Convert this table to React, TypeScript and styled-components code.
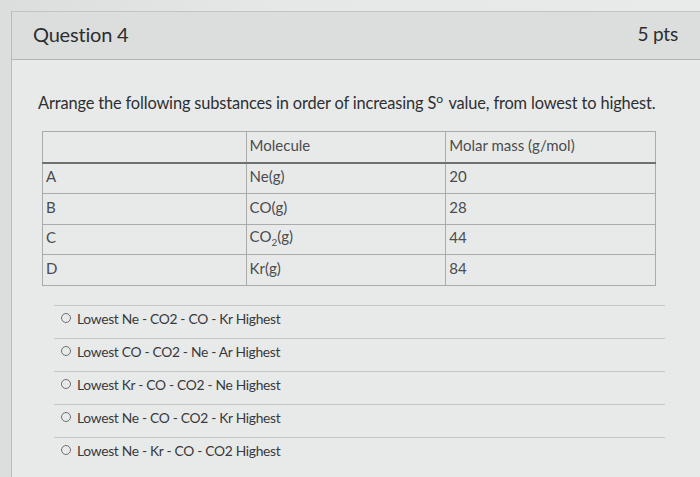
import React from "react";
import styled, { createGlobalStyle } from "styled-components";

const Global = createGlobalStyle`
  html, body { margin: 0; padding: 0; }
  body {
    width: 700px; height: 477px; overflow: hidden;
    background: #d9dbdb;
    font-family: Lato, "Open Sans", sans-serif;
  }
`;

const Page = styled.div`
  width: 700px;
  height: 477px;
  padding: 11px 0 0 11px;
  box-sizing: border-box;
  background: linear-gradient(90deg, #dcdede 0%, #e6e8e8 40%, #e9ebeb 100%);
`;

const Card = styled.div`
  height: 100%;
  border-left: 1px solid #b9bbbb;
  border-top: 1px solid #c3c5c5;
  background: #e8eaea;
`;

const Header = styled.div`
  height: 48px;
  box-sizing: border-box;
  display: flex;
  align-items: center;
  justify-content: space-between;
  padding: 0 22px 4px 21px;
  background: #dcdedd;
  border-bottom: 1px solid #b3b5b5;
`;

const Title = styled.h2`
  margin: 0;
  font-size: 20px;
  font-weight: 400;
  color: #2b2d2f;
  letter-spacing: -0.2px;
`;

const Points = styled.span`
  font-size: 19px;
  color: #2b2d2f;
  letter-spacing: -0.2px;
`;

const Body = styled.div`
  padding: 33px 0 0 26px;
`;

const Prompt = styled.p`
  margin: 0 0 19px 0;
  font-size: 16.4px;
  color: #2d2f31;
  letter-spacing: -0.15px;
  sup { font-size: 12px; line-height: 0; margin-right: 2px; }
`;

const Table = styled.table`
  border-collapse: collapse;
  width: 614px;
  margin-left: 4px;
  font-size: 15px;
  color: #4a4c4e;
  td, th {
    border: 1px solid #a9abac;
    height: 25.5px;
    padding: 0 2px 4px 3px;
    text-align: left;
    vertical-align: middle;
    font-weight: 400;
  }
  th { border-bottom: 2px solid #6e7072; }
  sub { font-size: 10px; }
`;

const Answers = styled.div`
  margin: 19px 0 0 16px;
  width: 611px;
`;

const Answer = styled.label`
  display: flex;
  align-items: center;
  gap: 6px;
  height: 32px;
  box-sizing: border-box;
  padding: 0 0 6px 7px;
  border-top: 1px solid #c5c7c7;
  font-size: 13.8px;
  color: #38393b;
  letter-spacing: -0.3px;
  & + & { margin-top: 1px; }
`;

const Radio = styled.span`
  width: 8px;
  height: 8px;
  border: 1.5px solid #6d6f71;
  border-radius: 50%;
  flex: none;
`;

const rows = [
  ["A", "Ne(g)", "20"],
  ["B", "CO(g)", "28"],
  ["C", "CO2", "44"],
  ["D", "Kr(g)", "84"],
];

const answers = [
  "Lowest Ne - CO2 - CO - Kr Highest",
  "Lowest CO - CO2 - Ne - Ar Highest",
  "Lowest Kr - CO - CO2 - Ne Highest",
  "Lowest Ne - CO - CO2 - Kr Highest",
  "Lowest Ne - Kr - CO - CO2 Highest",
];

export default function App() {
  return (
    <>
      <Global />
      <Page>
        <Card>
          <Header>
            <Title>Question 4</Title>
            <Points>5 pts</Points>
          </Header>
          <Body>
            <Prompt>
              Arrange the following substances in order of increasing S<sup>o</sup> value, from lowest to highest.
            </Prompt>
            <Table>
              <colgroup>
                <col style={{ width: 204 }} />
                <col style={{ width: 200 }} />
                <col style={{ width: 210 }} />
              </colgroup>
              <thead>
                <tr>
                  <th></th>
                  <th>Molecule</th>
                  <th>Molar mass (g/mol)</th>
                </tr>
              </thead>
              <tbody>
                {rows.map(([l, m, w]) => (
                  <tr key={l}>
                    <td>{l}</td>
                    <td>{m === "CO2" ? <>CO<sub>2</sub>(g)</> : m}</td>
                    <td>{w}</td>
                  </tr>
                ))}
              </tbody>
            </Table>
            <Answers>
              {answers.map((a) => (
                <Answer key={a}>
                  <Radio />
                  {a}
                </Answer>
              ))}
            </Answers>
          </Body>
        </Card>
      </Page>
    </>
  );
}
